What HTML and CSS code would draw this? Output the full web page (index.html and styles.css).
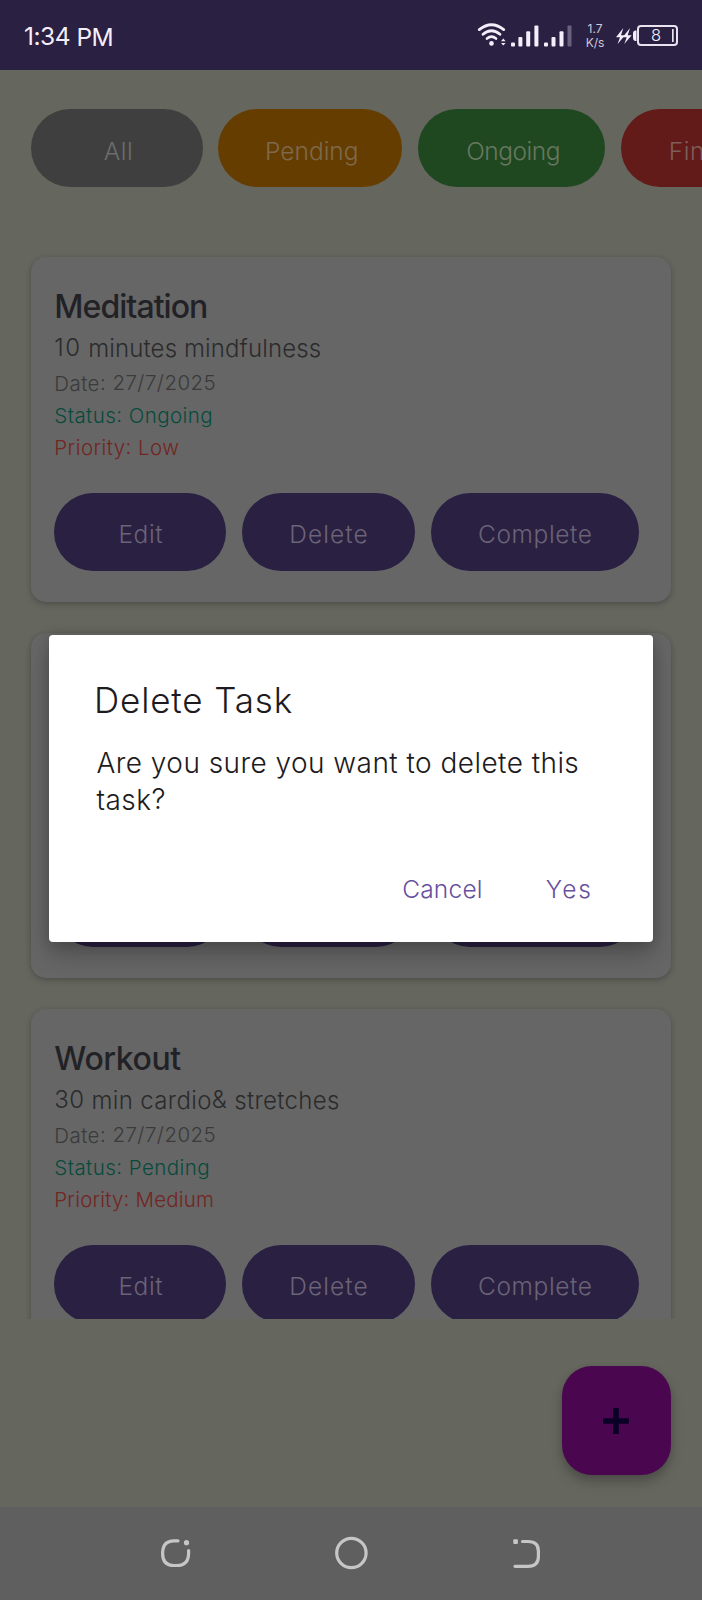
FILE: index.html
```
<!DOCTYPE html>
<html lang="en">
<head>
<meta charset="utf-8">
<title>Tasks</title>
<link rel="stylesheet" href="styles.css">
</head>
<body>
<div class="screen">
  <header class="status">
    <div class="clock"><span class="up">1:34</span> PM</div>
    <svg class="signal" width="98" height="28" viewBox="478 22 98 28" fill="none" stroke="#f5eefa" stroke-linecap="round">
      <path d="M480.3 29.6Q492.5 19.8 504.7 29.6" stroke-width="2.8"/>
      <path d="M484 34.3Q492.5 27.2 501 34.3" stroke-width="2.8"/>
      <path d="M488 38.6Q492.5 34.8 497 38.6" stroke-width="2.6"/>
      <circle cx="492.5" cy="43.4" r="2.3" fill="#f5eefa" stroke="none"/>
      <g fill="#f5eefa" stroke="none">
        <path d="M502 41.3L504.3 38.6L506.6 41.3ZM502 43L504.3 45.6L506.6 43Z"/>
        <rect x="512" y="42.6" width="4" height="4" rx="1"/>
        <rect x="519.4" y="37" width="4" height="9.6" rx="1"/>
        <rect x="527.2" y="31.3" width="4" height="15.3" rx="1"/>
        <rect x="535.4" y="25.4" width="4" height="21.2" rx="1"/>
        <rect x="545" y="42.6" width="4" height="4" rx="1"/>
        <rect x="552.5" y="37" width="4" height="9.6" rx="1"/>
        <rect x="560.5" y="31.3" width="4" height="15.3" rx="1"/>
        <rect x="568.5" y="25.4" width="4" height="21.2" rx="1" fill="#6a617e"/>
      </g>
    </svg>
    <div class="speed"><span>1.7</span><span>K/s</span></div>
    <svg class="bolt" width="22" height="20" viewBox="616 26 22 20" fill="#f5eefa">
      <path d="M624.3 28L617 37.2H621L618.6 44L626 35.2H622Z"/>
      <path d="M631 28L623.7 37.2H627.7L625.3 44L632.7 35.2H628.7Z"/>
      <path d="M637.5 30.5H636Q634 31 634 33V38Q634 40.5 636 41H637.5Z"/>
    </svg>
    <div class="battery"><span>8</span></div>
  </header>

  <nav class="filters">
    <button class="pill all">All</button>
    <button class="pill pending">Pending</button>
    <button class="pill ongoing">Ongoing</button>
    <button class="pill finished">Finished</button>
  </nav>

  <main class="list">
    <article class="card">
      <h2 class="name">Meditation</h2>
      <p class="desc"><span class="up count">10</span> minutes mindfulness</p>
      <p class="meta date">Date<span class="up">: 27/7/2025</span></p>
      <p class="meta state">Status<span class="up">:</span> Ongoing</p>
      <p class="meta priority">Priority<span class="up">:</span> Low</p>
      <div class="buttons">
        <button class="pill edit">Edit</button>
        <button class="pill delete">Delete</button>
        <button class="pill complete">Complete</button>
      </div>
    </article>
    <article class="card covered">
      <div class="buttons">
        <button class="pill edit"></button>
        <button class="pill delete"></button>
        <button class="pill complete"></button>
      </div>
    </article>
    <article class="card">
      <h2 class="name workout">Workout</h2>
      <p class="desc cardio"><span class="up">30</span> min cardio<span class="up">&amp;</span> stretches</p>
      <p class="meta date">Date<span class="up">: 27/7/2025</span></p>
      <p class="meta state">Status<span class="up">:</span> Pending</p>
      <p class="meta priority medium">Priority<span class="up">:</span> Medium</p>
      <div class="buttons">
        <button class="pill edit">Edit</button>
        <button class="pill delete">Delete</button>
        <button class="pill complete">Complete</button>
      </div>
    </article>
  </main>

  <div class="bottom">
    <button class="fab" aria-label="Add task">
      <svg width="26" height="26" viewBox="0 0 26 26" stroke="#0b0026" stroke-width="5.6"><path d="M0 13H26M13 0V26"/></svg>
    </button>
  </div>

  <footer class="navbar">
    <svg width="32" height="32" viewBox="160 1537 32 32" fill="none" stroke="#c6c6c6" stroke-width="3.2" stroke-linecap="round">
      <path d="M178 1540.8H174Q162.600 1540.8 162.600 1553.500Q162.600 1565.500 174 1565.500H177Q188.600 1565.500 188.600 1553V1550.500"/>
      <circle cx="186.500" cy="1542.700" r="2.600" fill="#c6c6c6" stroke="none"/>
    </svg>
    <svg width="34" height="34" viewBox="0 0 34 34" fill="none" stroke="#c6c6c6" stroke-width="3.2"><circle cx="16.400" cy="17" r="14.700"/></svg>
    <svg width="32" height="32" viewBox="511 1537 32 32" fill="none" stroke="#c6c6c6" stroke-width="3.2" stroke-linecap="round">
      <path d="M522.500 1541.500H528Q538.400 1541.500 538.400 1551V1556.500Q538.400 1566.300 528 1566.300H515"/>
      <rect x="513.300" y="1539.300" width="4.600" height="4.600" rx="1" fill="#c6c6c6" stroke="none"/>
    </svg>
  </footer>

  <section class="dialog" role="dialog">
    <h1 class="dialog-title">Delete Task</h1>
    <p class="dialog-text">Are you sure you want to delete this<br>task<span class="up">?</span></p>
    <div class="dialog-actions">
      <button class="link cancel">Cancel</button>
      <button class="link yes">Yes</button>
    </div>
  </section>
</div>
</body>
</html>
```
FILE: styles.css
```
* { box-sizing: border-box; }
body, h1, h2, p { margin: 0; }
body { font-family: Inter, "Liberation Sans", sans-serif; font-weight: 350; }
button { border: 0; padding: 0; background: none; font: inherit; color: inherit; }
svg { display: block; flex: none; }

.screen {
  position: relative;
  display: flex;
  flex-direction: column;
  width: 702px;
  height: 1600px;
  overflow: hidden;
  background: #65665e;
}
.up { vertical-align: 1px; line-height: 1; }

.status {
  display: flex;
  flex: none;
  align-items: center;
  height: 70px;
  padding: 0 24px 0 24px;
  background: #2a2041;
  color: #f5eefa;
}
.clock { flex: 1; padding-top: 4px; font-size: 24.5px; font-weight: 400; letter-spacing: -.5px; }
.signal { margin-top: 2px; }
.speed {
  display: flex;
  flex-direction: column;
  width: 40px;
  padding-top: 2px;
  font-size: 12px;
  line-height: 14.5px;
  font-weight: 400;
  text-align: center;
  color: #cfc8da;
}
.bolt { margin-top: 2px; }
.battery {
  width: 41px;
  height: 21px;
  padding-right: 3px;
  border: 2px solid #e9e2f0;
  border-radius: 4px;
  background: linear-gradient(#e9e2f0, #e9e2f0) 33px 2px / 1.7px 13px no-repeat;
  font-size: 16.5px;
  line-height: 17px;
  text-align: center;
}

.filters {
  display: flex;
  flex: none;
  gap: 15.5px;
  height: 187px;
  padding: 39px 0 0 31.3px;
}
.pill {
  flex: none;
  height: 78px;
  padding: 4px 0 0 1px;
  border-radius: 39px;
  font-size: 24.5px;
  letter-spacing: .6px;
  text-align: center;
}
.filters .pill { padding: 5px 0 0 3px; }
.all { width: 171.5px; background: #3f3f3f; color: #6c6c6c; }
.pending { width: 184px; background: #663d00; color: #7d6a4c; letter-spacing: 0; }
.filters .ongoing { width: 187.5px; background: #1f4821; color: #68775f; letter-spacing: -.5px; }
.finished { width: 194px; background: #621b18; color: #7d5e5b; }

.list {
  display: flex;
  flex: none;
  flex-direction: column;
  gap: 31px;
  height: 1062px;
  padding: 0 31px 0 31.3px;
  clip-path: inset(-10px 0 0 0);
}
.card {
  flex: none;
  height: 345px;
  padding: 27px 23px 0;
  border-radius: 15px;
  background: #666;
  box-shadow: 0 3px 6px rgba(0, 0, 0, .18), 0 0 4px rgba(0, 0, 0, .08);
}
.covered { padding-top: 206px; }
.name { font-size: 32px; line-height: 46px; font-weight: 500; letter-spacing: -.95px; color: #222226; }
.workout { letter-spacing: -.4px; }
.desc { font-size: 24px; line-height: 38px; letter-spacing: .12px; color: #2b2b2b; }
.count { letter-spacing: 1.4px; }
.cardio { letter-spacing: .35px; }
.meta { font-size: 20.5px; line-height: 32px; letter-spacing: .45px; }
.date { color: #3a3a3a; }
.state { color: #074b3d; }
.priority { color: #722522; }
.medium { letter-spacing: .2px; }
.buttons { display: flex; gap: 15.5px; margin-top: 29px; }
.covered .buttons { margin-top: 29.5px; }
.buttons .pill { background: #2a2041; color: #6b6378; }
.buttons .edit { width: 172px; }
.buttons .delete { width: 173.5px; letter-spacing: 1.1px; }
.buttons .complete { width: 208px; }

.bottom { display: flex; flex: 1; justify-content: flex-end; padding: 47px 31px 0 0; }
.fab {
  display: grid;
  place-items: center;
  width: 109px;
  height: 109px;
  padding-right: 1px;
  border-radius: 30px;
  background: #4a0750;
  box-shadow: 0 7px 12px rgba(0, 0, 0, .22), 0 1px 6px rgba(0, 0, 0, .08);
}
.navbar {
  display: flex;
  flex: none;
  align-items: center;
  justify-content: space-between;
  height: 93px;
  padding: 0 159px 1px 160px;
  background: #5f5f5f;
}

.dialog {
  position: absolute;
  left: 49px;
  top: 635px;
  width: 604px;
  height: 306.5px;
  padding: 44px 45px 0;
  border-radius: 4px;
  background: #fff;
  box-shadow: 0 12px 24px rgba(0, 0, 0, .24), 0 2px 12px rgba(0, 0, 0, .14);
  color: #1d1b20;
}
.dialog-title { font-size: 35px; line-height: 42px; font-weight: 350; letter-spacing: .85px; }
.dialog-text { padding: 24px 0 0 2.5px; font-size: 28px; line-height: 36.5px; letter-spacing: .45px; white-space: nowrap; }
.dialog-actions {
  display: flex;
  justify-content: flex-end;
  gap: 63px;
  padding: 56px 15px 0 0;
  color: #6750a0;
}
.link { font-size: 24.5px; line-height: 30px; letter-spacing: .2px; }
.yes { letter-spacing: 2px; }
```
